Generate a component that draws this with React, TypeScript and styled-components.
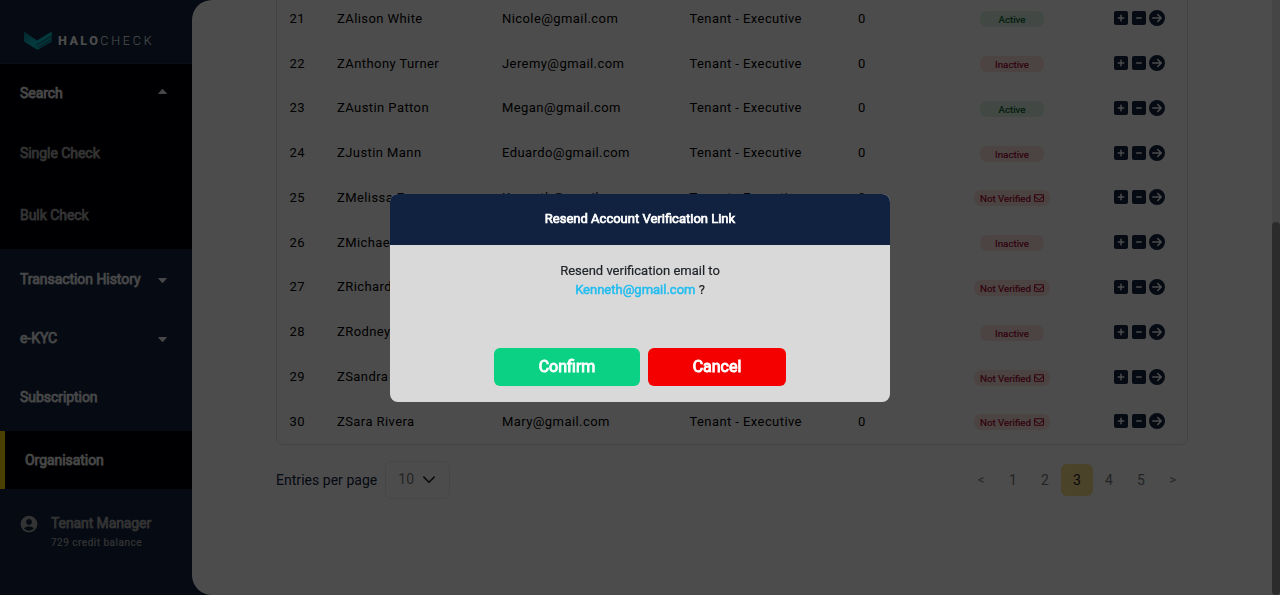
import React from "react";
import styled, { createGlobalStyle } from "styled-components";
import { FaSquarePlus, FaSquareMinus, FaCircleArrowRight, FaRegEnvelope } from "react-icons/fa6";
import { MdAccountCircle } from "react-icons/md";

const GlobalStyle = createGlobalStyle`
  * { box-sizing: border-box; }
  body { margin: 0; overflow: hidden; background: #112240; font-family: Roboto, sans-serif; }
`;

const Page = styled.div`
  display: flex;
  width: 1280px;
  height: 595px;
  overflow: hidden;
  background: #112240;
`;

const Sidebar = styled.nav`
  width: 192px;
  flex: none;
  display: flex;
  flex-direction: column;
  background: #112240;
`;

const Brand = styled.div`
  height: 64px;
  padding: 17px 0 0 24px;
  display: flex;
  align-items: center;
  border-bottom: 1px solid #1c2e50;
`;

const BrandName = styled.span`
  margin-left: 6px;
  font-size: 12.6px;
  letter-spacing: 2.75px;
  font-weight: 300;
  color: #fff;
  white-space: nowrap;
`;

const BrandStrong = styled.span`
  font-weight: 800;
  letter-spacing: 2.4px;
`;

const NavItem = styled.div<{ $h: number; $lift?: number; $dim?: boolean; $dark?: boolean; $active?: boolean }>`
  height: ${(p) => p.$h}px;
  flex: none;
  display: flex;
  align-items: center;
  justify-content: space-between;
  padding: 0 25px ${(p) => p.$lift ?? 0}px 20px;
  border-left: ${(p) => (p.$active ? "5px solid #ffd500" : "none")};
  background: ${(p) => (p.$dark ? "#010308" : "transparent")};
  color: ${(p) => (p.$dim ? "#acacac" : "#eee")};
  font-size: 14px;
  line-height: 20px;
  letter-spacing: -0.05px;
  -webkit-text-stroke: 0.75px currentColor;
`;

const Caret = styled.svg<{ $up?: boolean }>`
  width: 9px;
  height: 5px;
  margin-top: ${(p) => (p.$up ? -3 : 3)}px;
  transform: ${(p) => (p.$up ? "rotate(180deg)" : "none")};
`;

const Account = styled.div`
  margin-top: 23px;
  padding-left: 19px;
  display: flex;
  gap: 12px;
  color: #acacac;
  svg { margin-top: 2px; }
`;

const AccountText = styled.div`
  display: flex;
  flex-direction: column;
`;

const AccountName = styled.span`
  font-size: 14px;
  line-height: 22px;
  letter-spacing: -0.1px;
  -webkit-text-stroke: 0.75px currentColor;
`;

const Credit = styled.span`
  font-size: 10px;
  line-height: 18px;
  letter-spacing: 0.5px;
  -webkit-text-stroke: 0.2px currentColor;
`;

const Main = styled.main`
  flex: 1;
  min-width: 0;
  display: flex;
  justify-content: space-between;
  background: #fff;
  border-radius: 20px 0 0 20px;
`;

const Content = styled.div`
  width: 912px;
  margin-left: 84px;
`;

const Table = styled.div`
  margin-top: -5px;
  border: 1px solid #dee2e6;
  border-radius: 6px;
`;

const Row = styled.div`
  height: 44.78px;
  display: grid;
  grid-template-columns: 47.5px 165px 187.5px 168.5px 104px 100px 1fr;
  align-items: center;
  padding-left: 12.5px;
  font-size: 13px;
  letter-spacing: 0.42px;
  color: #000;
  white-space: nowrap;
`;

const BadgeCell = styled.div`
  display: flex;
  justify-content: center;
  padding-top: 2px;
`;

const badgeColors = {
  Active: ["#dcf0e3", "#005c28"],
  Inactive: ["#fce5de", "#a80030"],
  "Not Verified": ["#fce5de", "#a80030"],
};
type Status = keyof typeof badgeColors;

const Badge = styled.span<{ $status: Status }>`
  width: ${(p) => (p.$status === "Not Verified" ? 76 : 64)}px;
  height: 16px;
  padding-top: 1px;
  display: flex;
  align-items: center;
  justify-content: center;
  gap: 3px;
  border-radius: 7px;
  font-size: 9.75px;
  font-weight: 400;
  letter-spacing: 0;
  -webkit-text-stroke: 0.2px currentColor;
  background: ${(p) => badgeColors[p.$status][0]};
  color: ${(p) => badgeColors[p.$status][1]};
  svg { margin-top: -1px; stroke: none; }
`;

const Actions = styled.div`
  display: flex;
  align-items: center;
  justify-content: flex-end;
  gap: 4px;
  padding-right: 22px;
  color: #112240;
  svg { width: 14px; height: 16px; }
  svg:last-child { width: 16px; margin-left: -1px; }
`;

const Footer = styled.div`
  margin-top: 16px;
  display: flex;
  align-items: center;
  justify-content: space-between;
`;

const Entries = styled.div`
  display: flex;
  align-items: center;
  gap: 8px;
  font-size: 14px;
  letter-spacing: 0.03px;
  color: #112240;
`;

const Select = styled.div`
  width: 65px;
  height: 38px;
  padding: 0 14px 1px 12px;
  display: flex;
  align-items: center;
  justify-content: space-between;
  border: 1px solid #e9ebee;
  border-radius: 6px;
  color: #777;
`;

const Pager = styled.div`
  display: flex;
  margin-right: -1px;
`;

const PageItem = styled.span<{ $current?: boolean; $arrow?: boolean }>`
  width: 32px;
  height: 32px;
  display: flex;
  align-items: center;
  justify-content: center;
  border-radius: 6px;
  font-size: ${(p) => (p.$arrow ? 13 : 14)}px;
  color: ${(p) => (p.$current ? "#222" : "#777")};
  background: ${(p) => (p.$current ? "#fcdc8c" : "transparent")};
`;

const ScrollTrack = styled.div`
  width: 8px;
  height: 595px;
  padding-top: 222px;
  background: #e6e6e6;
`;

const ScrollThumb = styled.div`
  height: 373px;
  border-radius: 5px;
  background: #909090;
`;

const Overlay = styled.div`
  position: fixed;
  inset: 0;
  display: flex;
  align-items: center;
  justify-content: center;
  background: rgba(0, 0, 0, 0.7);
`;

const Modal = styled.div`
  width: 500px;
  height: 208px;
  overflow: hidden;
  border-radius: 8px;
  background: #d9d9d9;
  text-align: center;
`;

const ModalHeader = styled.div`
  height: 51px;
  padding-bottom: 2px;
  display: flex;
  align-items: center;
  justify-content: center;
  background: #112240;
  color: #fff;
  font-size: 13px;
  -webkit-text-stroke: 0.7px currentColor;
`;

const Message = styled.p`
  margin: 16px 0 0;
  font-size: 13px;
  line-height: 19px;
  font-weight: 400;
  color: #212529;
  -webkit-text-stroke: 0.2px currentColor;
`;

const Email = styled.span`
  color: #22bdf0;
  -webkit-text-stroke: 0.5px currentColor;
`;

const Buttons = styled.div`
  margin-top: 49px;
  display: flex;
  justify-content: center;
  gap: 8px;
`;

const Button = styled.button<{ $w: number; $bg: string }>`
  width: ${(p) => p.$w}px;
  height: 38px;
  padding: 0;
  border: 0;
  border-radius: 6px;
  background: ${(p) => p.$bg};
  color: #fff;
  font-family: inherit;
  font-size: 16px;
  -webkit-text-stroke: 0.9px currentColor;
`;

const people: [number, string, string, Status][] = [
  [21, "ZAlison White", "Nicole@gmail.com", "Active"],
  [22, "ZAnthony Turner", "Jeremy@gmail.com", "Inactive"],
  [23, "ZAustin Patton", "Megan@gmail.com", "Active"],
  [24, "ZJustin Mann", "Eduardo@gmail.com", "Inactive"],
  [25, "ZMelissa Fox", "Kenneth@gmail.com", "Not Verified"],
  [26, "ZMichael Lee", "Daniel@gmail.com", "Inactive"],
  [27, "ZRichard Cole", "Robert@gmail.com", "Not Verified"],
  [28, "ZRodney Hall", "Steven@gmail.com", "Inactive"],
  [29, "ZSandra Diaz", "Laura@gmail.com", "Not Verified"],
  [30, "ZSara Rivera", "Mary@gmail.com", "Not Verified"],
];

const CaretIcon = ({ up }: { up?: boolean }) => (
  <Caret $up={up} viewBox="0 0 9 5" fill="currentColor">
    <path d="M.6 0h7.8q.6.2.2.8L5 4.7q-.5.5-1 0L.4.8Q0 .2.6 0z" stroke="none" />
  </Caret>
);

const Logo = () => (
  <svg width="28" height="19" viewBox="0 0 28 19">
    <defs>
      <linearGradient id="wing" x1="0" y1="0" x2="1" y2="1">
        <stop offset="0" stopColor="#0a8296" />
        <stop offset="0.5" stopColor="#0cc5cf" />
        <stop offset="1" stopColor="#0a7f93" />
      </linearGradient>
    </defs>
    <path d="M0 0.5L13 9.4 27.8 0.5v10.2L13.5 19 0 10.6z" fill="url(#wing)" />
    <path d="M12.5 14.2L27.8 5M15.4 16.2L27.8 8.4" stroke="#0b3c55" strokeWidth=".8" />
  </svg>
);

export default function App() {
  return (
    <>
      <GlobalStyle />
      <Page>
        <Sidebar>
          <Brand>
            <Logo />
            <BrandName>
              <BrandStrong>HALO</BrandStrong>CHECK
            </BrandName>
          </Brand>
          <NavItem $h={59} $lift={1} $dark>Search<CaretIcon up /></NavItem>
          <NavItem $h={60} $lift={1} $dark $dim>Single Check</NavItem>
          <NavItem $h={66} $lift={3} $dark $dim>Bulk Check</NavItem>
          <NavItem $h={60} $lift={1}>Transaction History<CaretIcon /></NavItem>
          <NavItem $h={58} $lift={1}>e-KYC<CaretIcon /></NavItem>
          <NavItem $h={64} $lift={5}>Subscription</NavItem>
          <NavItem $h={58} $lift={1} $dark $active>Organisation</NavItem>
          <Account>
            <MdAccountCircle size={20} />
            <AccountText>
              <AccountName>Tenant Manager</AccountName>
              <Credit>729 credit balance</Credit>
            </AccountText>
          </Account>
        </Sidebar>
        <Main>
          <Content>
            <Table>
              {people.map(([id, name, email, status]) => (
                <Row key={id}>
                  <span>{id}</span>
                  <span>{name}</span>
                  <span>{email}</span>
                  <span>Tenant - Executive</span>
                  <span>0</span>
                  <BadgeCell>
                    <Badge $status={status}>
                      {status}
                      {status === "Not Verified" && <FaRegEnvelope size={10} />}
                    </Badge>
                  </BadgeCell>
                  <Actions>
                    <FaSquarePlus />
                    <FaSquareMinus />
                    <FaCircleArrowRight />
                  </Actions>
                </Row>
              ))}
            </Table>
            <Footer>
              <Entries>
                Entries per page
                <Select>
                  10
                  <svg width="12" height="12" viewBox="0 0 16 16" fill="none" stroke="#212529" strokeWidth="2.2" strokeLinecap="round" strokeLinejoin="round">
                    <path d="m1.2 5.5 6.8 6.8 6.8-6.8" />
                  </svg>
                </Select>
              </Entries>
              <Pager>
                <PageItem $arrow>&lt;</PageItem>
                {[1, 2, 3, 4, 5].map((n) => (
                  <PageItem key={n} $current={n === 3}>{n}</PageItem>
                ))}
                <PageItem $arrow>&gt;</PageItem>
              </Pager>
            </Footer>
          </Content>
          <ScrollTrack>
            <ScrollThumb />
          </ScrollTrack>
        </Main>
      </Page>
      <Overlay>
        <Modal>
          <ModalHeader>Resend Account Verification Link</ModalHeader>
          <Message>
            Resend verification email to
            <br />
            <Email>Kenneth@gmail.com</Email> ?
          </Message>
          <Buttons>
            <Button $w={146} $bg="#0bd185">Confirm</Button>
            <Button $w={138} $bg="#f40000">Cancel</Button>
          </Buttons>
        </Modal>
      </Overlay>
    </>
  );
}
